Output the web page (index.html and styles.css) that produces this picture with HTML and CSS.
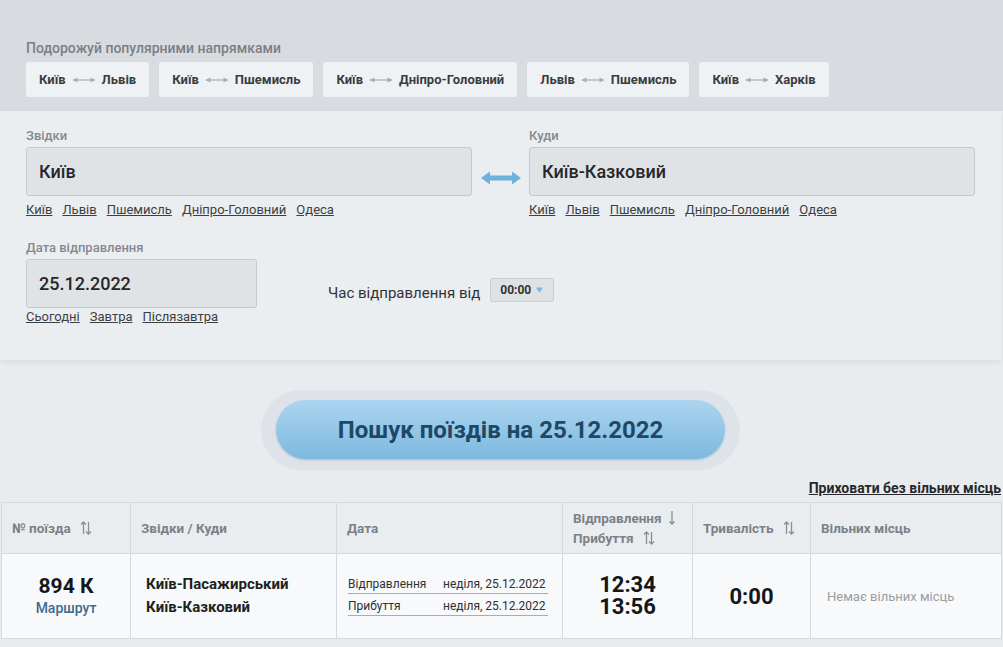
FILE: index.html
```html
<!DOCTYPE html>
<html lang="uk">
<head>
<meta charset="utf-8">
<title>Пошук поїздів</title>
<link rel="stylesheet" href="styles.css">
</head>
<body>
<div class="top">
  <div class="top-label">Подорожуй популярними напрямками</div>
  <div class="chips">
    <a class="chip"><span>Київ</span><svg class="mini-arrow" viewBox="0 0 24 8"><path d="M1 4h22" stroke="#a9acb0" stroke-width="1.2"/><path d="M0.5 4l5-2.5v5z M23.5 4l-5-2.5v5z" fill="#a9acb0"/></svg><span>Львів</span></a>
    <a class="chip"><span>Київ</span><svg class="mini-arrow" viewBox="0 0 24 8"><path d="M1 4h22" stroke="#a9acb0" stroke-width="1.2"/><path d="M0.5 4l5-2.5v5z M23.5 4l-5-2.5v5z" fill="#a9acb0"/></svg><span>Пшемисль</span></a>
    <a class="chip"><span>Київ</span><svg class="mini-arrow" viewBox="0 0 24 8"><path d="M1 4h22" stroke="#a9acb0" stroke-width="1.2"/><path d="M0.5 4l5-2.5v5z M23.5 4l-5-2.5v5z" fill="#a9acb0"/></svg><span>Дніпро-Головний</span></a>
    <a class="chip"><span>Львів</span><svg class="mini-arrow" viewBox="0 0 24 8"><path d="M1 4h22" stroke="#a9acb0" stroke-width="1.2"/><path d="M0.5 4l5-2.5v5z M23.5 4l-5-2.5v5z" fill="#a9acb0"/></svg><span>Пшемисль</span></a>
    <a class="chip"><span>Київ</span><svg class="mini-arrow" viewBox="0 0 24 8"><path d="M1 4h22" stroke="#a9acb0" stroke-width="1.2"/><path d="M0.5 4l5-2.5v5z M23.5 4l-5-2.5v5z" fill="#a9acb0"/></svg><span>Харків</span></a>
  </div>
</div>

<div class="panel">
  <div class="stations">
    <div class="field">
      <div class="label">Звідки</div>
      <div class="input wide">Київ</div>
      <div class="quick"><a>Київ</a><a>Львів</a><a>Пшемисль</a><a>Дніпро-Головний</a><a>Одеса</a></div>
    </div>
    <div class="swap">
      <svg viewBox="0 0 40 14" width="40" height="14"><path d="M0 7 L9 0.5 V4.5 H31 V0.5 L40 7 L31 13.5 V9.5 H9 V13.5 Z" fill="#6fb0dc"/></svg>
    </div>
    <div class="field">
      <div class="label">Куди</div>
      <div class="input wide">Київ-Казковий</div>
      <div class="quick"><a>Київ</a><a>Львів</a><a>Пшемисль</a><a>Дніпро-Головний</a><a>Одеса</a></div>
    </div>
  </div>
  <div class="date-row">
    <div class="field">
      <div class="label">Дата відправлення</div>
      <div class="input date">25.12.2022</div>
      <div class="quick tight"><a>Сьогодні</a><a>Завтра</a><a>Післязавтра</a></div>
    </div>
    <div class="time">
      <span class="time-label">Час відправлення від</span>
      <span class="select">00:00<svg viewBox="0 0 8 6" width="7" height="6"><path d="M0 0h8L4 6z" fill="#7db7e0"/></svg></span>
    </div>
  </div>
</div>

<div class="search">
  <div class="pill"><button class="btn">Пошук поїздів на 25.12.2022</button></div>
</div>

<div class="hide-row"><a class="hide">Приховати без вільних місць</a></div>

<table class="trains">
  <colgroup>
    <col class="w1"><col class="w2"><col class="w3"><col class="w4"><col class="w5"><col class="w6">
  </colgroup>
  <thead>
    <tr>
      <th><span class="th">№ поїзда <svg class="sort" viewBox="0 0 12 14"><path d="M3.5 1v12M1 3.5l2.5-2.5 2.5 2.5M8.5 13V1M6 10.5l2.5 2.5 2.5-2.5" stroke="#8a8f94" stroke-width="1.3" fill="none"/></svg></span></th>
      <th>Звідки / Куди</th>
      <th>Дата</th>
      <th><div class="th2">Відправлення <svg class="sort1" viewBox="0 0 8 14"><path d="M4 0v13M1.5 10.5l2.5 2.5 2.5-2.5" stroke="#8a8f94" stroke-width="1.3" fill="none"/></svg></div><div class="th2">Прибуття <svg class="sort" viewBox="0 0 12 14"><path d="M3.5 1v12M1 3.5l2.5-2.5 2.5 2.5M8.5 13V1M6 10.5l2.5 2.5 2.5-2.5" stroke="#8a8f94" stroke-width="1.3" fill="none"/></svg></div></th>
      <th><span class="th">Тривалість <svg class="sort" viewBox="0 0 12 14"><path d="M3.5 1v12M1 3.5l2.5-2.5 2.5 2.5M8.5 13V1M6 10.5l2.5 2.5 2.5-2.5" stroke="#8a8f94" stroke-width="1.3" fill="none"/></svg></span></th>
      <th>Вільних місць</th>
    </tr>
  </thead>
  <tbody>
    <tr>
      <td class="num"><div class="train-no">894 К</div><a class="route">Маршрут</a></td>
      <td class="stn"><div>Київ-Пасажирський</div><div>Київ-Казковий</div></td>
      <td class="dates"><div class="dline"><span>Відправлення</span><span>неділя, 25.12.2022</span></div><div class="dline"><span>Прибуття</span><span>неділя, 25.12.2022</span></div></td>
      <td class="times"><div>12:34</div><div>13:56</div></td>
      <td class="dur">0:00</td>
      <td class="free">Немає вільних місць</td>
    </tr>
  </tbody>
</table>
</body>
</html>
```

FILE: styles.css
```css
html, body {
  margin: 0;
  padding: 0;
}
body {
  background: #e9ecef;
  font-family: Roboto, "Noto Sans", "Liberation Sans", sans-serif;
  color: #333;
  width: 1003px;
  height: 647px;
  overflow: hidden;
}
a { color: inherit; cursor: pointer; }

.top {
  background: #d8dbdf;
  padding: 40px 26px 14px;
}
.top-label {
  font-size: 14px;
  font-weight: 500;
  color: #7b8086;
  line-height: 16px;
}
.chips {
  display: flex;
  gap: 10px;
  margin-top: 6px;
}
.chip {
  display: flex;
  align-items: center;
  height: 35px;
  padding: 0 13px;
  background: #eff2f5;
  border-radius: 2px;
  font-size: 13px;
  font-weight: 700;
  color: #3a3d40;
}
.mini-arrow {
  width: 24px;
  height: 8px;
  margin: 0 6px;
}

.panel {
  width: 1001px;
  box-sizing: border-box;
  background: #ebeef1;
  padding: 17px 26px 0;
  height: 249px;
  box-shadow: 0 2px 6px rgba(0,0,0,0.07);
  position: relative;
}
.stations {
  display: flex;
  align-items: flex-start;
}
.label {
  font-size: 13px;
  color: #85898e;
  line-height: 16px;
  font-weight: 500;
}
.input {
  margin-top: 3px;
  height: 49px;
  box-sizing: border-box;
  background: #e0e3e6;
  border: 1px solid #c7cacd;
  border-radius: 3px;
  padding: 0 12px;
  display: flex;
  align-items: center;
  font-size: 18px;
  font-weight: 500;
  color: #25272a;
}
.input.wide { width: 446px; }
.input.date { width: 231px; }
.swap {
  width: 58px;
  display: flex;
  justify-content: center;
  padding-top: 43px;
}
.quick {
  display: flex;
  gap: 10px;
  margin-top: 6px;
  font-size: 13px;
  line-height: 16px;
}
.quick.tight { margin-top: 1px; }
.quick a {
  text-decoration: underline;
  color: #3c3f42;
}
.date-row {
  display: flex;
  align-items: flex-start;
  margin-top: 22px;
}
.time {
  display: flex;
  align-items: center;
  margin-left: 71px;
  margin-top: 38px;
}
.time-label {
  font-size: 15px;
  color: #303336;
  padding-top: 5px;
}
.select {
  margin-left: 10px;
  height: 24px;
  width: 64px;
  box-sizing: border-box;
  background: #dfe2e5;
  border: 1px solid #cbced1;
  border-radius: 2px;
  display: flex;
  align-items: center;
  padding-left: 9px;
  gap: 5px;
  font-size: 12px;
  font-weight: 700;
  color: #333;
}

.search {
  display: flex;
  justify-content: center;
  margin-top: 30px;
  padding-right: 2px;
}
.pill {
  width: 479px;
  height: 80px;
  box-sizing: border-box;
  border-radius: 40px;
  background: #dde3e9;
  padding: 10px 15px 11px;
}
.btn {
  width: 100%;
  height: 59px;
  border: none;
  border-radius: 30px;
  background: linear-gradient(#acd5f0, #7eb8df);
  box-shadow: 0 1px 2px rgba(60,110,150,0.35);
  font-family: Roboto, "Noto Sans", sans-serif;
  font-size: 24px;
  font-weight: 700;
  color: #1e4866;
  padding: 0;
  cursor: pointer;
}

.hide-row {
  display: flex;
  justify-content: flex-end;
  margin-top: 9px;
  padding-right: 2px;
  height: 18px;
  line-height: 18px;
}
.hide {
  font-size: 14px;
  font-weight: 700;
  color: #26282b;
  text-decoration: underline;
}

.trains {
  margin-top: 5px;
  margin-left: 1px;
  width: 1000px;
  border-collapse: collapse;
  table-layout: fixed;
}
.w1 { width: 129px; }
.w2 { width: 206px; }
.w3 { width: 226px; }
.w4 { width: 130px; }
.w5 { width: 118px; }
.w6 { width: 191px; }
.trains th, .trains td {
  border: 1px solid #d6dadf;
  padding: 0;
}
.trains th {
  height: 50px;
  background: #e9edf0;
  text-align: left;
  font-size: 13.5px;
  font-weight: 700;
  color: #7c8187;
  padding-left: 10px;
  vertical-align: middle;
}
.trains td {
  height: 84px;
  background: #f7f9fa;
  vertical-align: middle;
}
.th { display: inline-flex; align-items: center; }
.sort { width: 12px; height: 14px; margin-left: 9px; }
.sort1 { width: 8px; height: 14px; margin-left: 6px; }
.th2 { display: flex; align-items: center; line-height: 20px; }

.num { text-align: center; }
.train-no {
  font-size: 21px;
  font-weight: 700;
  color: #15171a;
  line-height: 24px;
}
.route {
  font-size: 14px;
  font-weight: 500;
  color: #3e6b8d;
  line-height: 20px;
}
.trains td.stn {
  padding-left: 15px;
  font-size: 15px;
  font-weight: 700;
  color: #1d1f22;
  line-height: 23px;
}
.trains td.dates { padding-left: 11px; }
.dline {
  display: flex;
  width: 200px;
  font-size: 12px;
  color: #2e3033;
  border-bottom: 1px solid #a9adb1;
  line-height: 17px;
  margin: 3px 0 4px;
}
.dline span:first-child { width: 95px; }
.times {
  text-align: center;
  font-size: 22px;
  font-weight: 700;
  color: #141618;
  line-height: 22px;
}
.dur {
  text-align: center;
  font-size: 22px;
  font-weight: 700;
  color: #141618;
}
.trains td.free {
  padding-left: 16px;
  font-size: 13px;
  color: #9a9ea3;
}
```
